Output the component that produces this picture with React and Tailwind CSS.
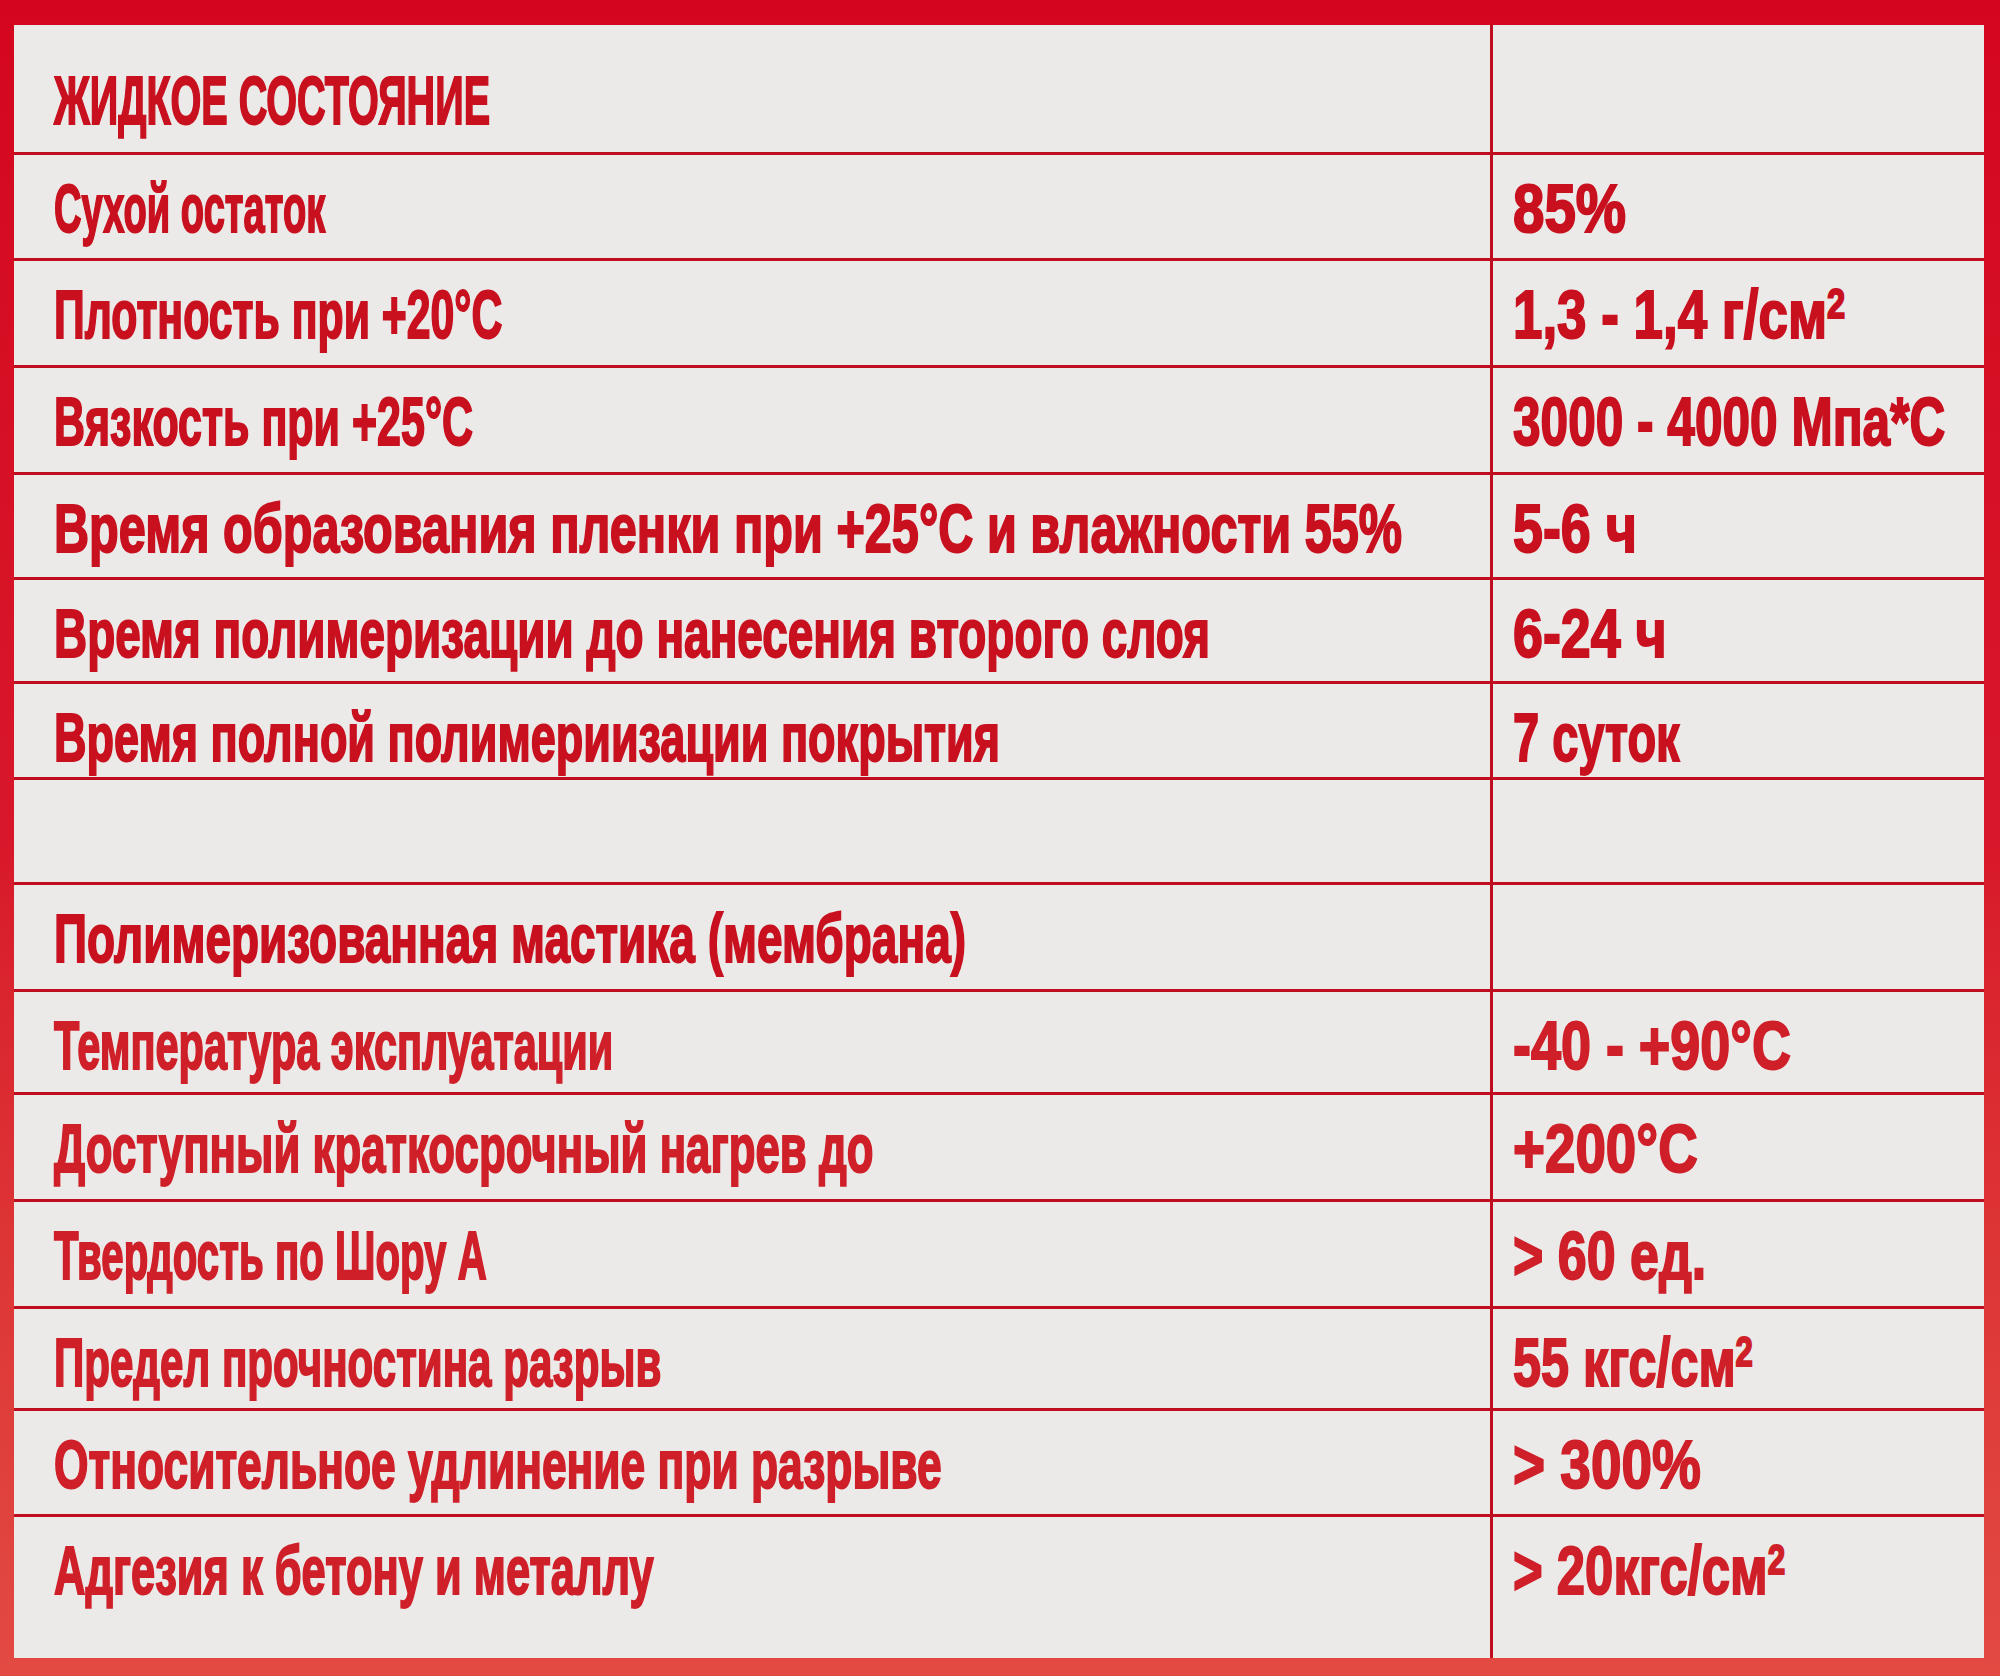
import React from 'react';

const rows = [
  { label: 'ЖИДКОЕ СОСТОЯНИЕ', value: '', h: 'h-[127px]', header: true, ls: 'scale-x-[0.582]', vs: '' },
  { label: 'Сухой остаток', value: '85%', h: 'h-[103px]', ls: 'scale-x-[0.561]', vs: 'scale-x-[0.831]' },
  { label: 'Плотность при +20°С', value: '1,3 - 1,4 г/см²', h: 'h-[104px]', ls: 'scale-x-[0.629]', vs: 'scale-x-[0.778]' },
  { label: 'Вязкость при +25°С', value: '3000 - 4000 Мпа*С', h: 'h-[104px]', ls: 'scale-x-[0.632]', vs: 'scale-x-[0.729]' },
  { label: 'Время образования пленки при +25°С и влажности 55%', value: '5-6 ч', h: 'h-[102px]', ls: 'scale-x-[0.715]', vs: 'scale-x-[0.791]' },
  { label: 'Время полимеризации до нанесения второго слоя', value: '6-24 ч', h: 'h-[101px]', ls: 'scale-x-[0.675]', vs: 'scale-x-[0.791]' },
  { label: 'Время полной полимериизации покрытия', value: '7 суток', h: 'h-[93px]', ls: 'scale-x-[0.662]', vs: 'scale-x-[0.691]' },
  { label: '', value: '', h: 'h-[102px]', ls: '', vs: '' },
  { label: 'Полимеризованная мастика (мембрана)', value: '', h: 'h-[104px]', ls: 'scale-x-[0.676]', vs: '' },
  { label: 'Температура эксплуатации', value: '-40 - +90°С', h: 'h-[100px]', ls: 'scale-x-[0.610]', vs: 'scale-x-[0.793]', low: true },
  { label: 'Доступный краткосрочный нагрев до', value: '+200°С', h: 'h-[104px]', ls: 'scale-x-[0.644]', vs: 'scale-x-[0.805]', low: true },
  { label: 'Твердость по Шору А', value: '> 60 ед.', h: 'h-[104px]', ls: 'scale-x-[0.592]', vs: 'scale-x-[0.764]', low: true },
  { label: 'Предел прочностина разрыв', value: '55 кгс/см²', h: 'h-[99px]', ls: 'scale-x-[0.619]', vs: 'scale-x-[0.740]', low: true },
  { label: 'Относительное удлинение при разрыве', value: '> 300%', h: 'h-[103px]', ls: 'scale-x-[0.652]', vs: 'scale-x-[0.808]', low: true },
  { label: 'Адгезия к бетону и металлу', value: '> 20кгс/см²', h: 'flex-1', ls: 'scale-x-[0.639]', vs: 'scale-x-[0.748]', low: true },
];

// the "²" of the label sits high and large, like a cap-height superscript
const withSquare = (text) => {
  const parts = text.split('²');
  if (parts.length === 1) return text;
  return (
    <>
      {parts[0]}
      <span className="relative -top-[20px] text-[42px]">2</span>
      {parts[1]}
    </>
  );
};

const Cell = ({ text, header, scale, low, className }) => (
  <div className={`bg-[#ebeae8] overflow-hidden ${className}`}>
    {text && (
      <span
        className={`inline-block origin-left whitespace-nowrap font-bold leading-none text-[68px] [-webkit-text-stroke:2px_currentColor] ${
          low ? 'text-[#cf1f28]' : 'text-[#c8101f]'
        } ${header ? 'pt-[41px]' : 'pt-[19px]'} ${scale}`}
      >
        {withSquare(text)}
      </span>
    )}
  </div>
);

export default function App() {
  return (
    <div className="w-[2000px] h-[1676px] bg-linear-to-b from-[#d4061e] via-[#d8172a] to-[#e24a42] pt-[25px] pl-[14px] pr-[16px] pb-[18px] font-['Liberation_Sans',Arial,sans-serif]">
      <div className="flex h-full flex-col gap-[3px] bg-[#c00d1f]">
        {rows.map((row, i) => (
          <div key={i} className={`grid grid-cols-[1476px_1fr] gap-[3px] ${row.h}`}>
            <Cell text={row.label} header={row.header} scale={row.ls} low={row.low} className="pl-[40px]" />
            <Cell text={row.value} scale={row.vs} low={row.low} className="pl-[20px]" />
          </div>
        ))}
      </div>
    </div>
  );
}
